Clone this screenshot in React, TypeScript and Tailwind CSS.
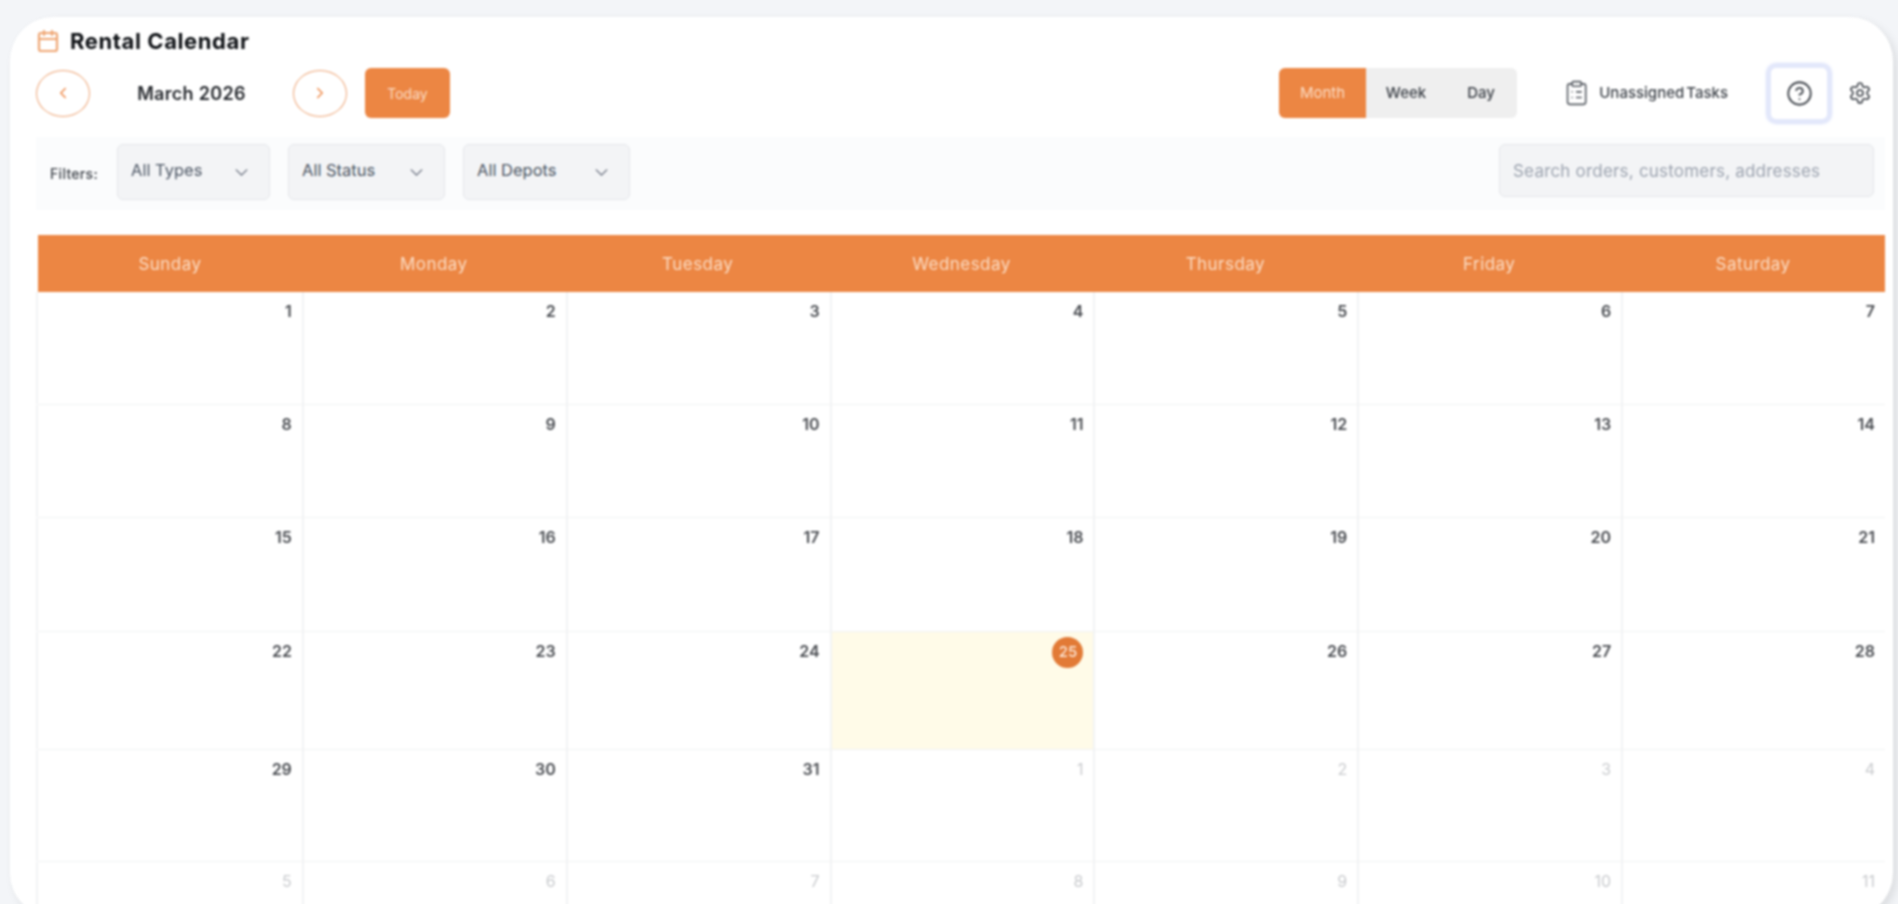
import { ChevronDown, ChevronLeft, ChevronRight, CircleHelp, ClipboardList, Settings, Calendar } from "lucide-react";

const font = { fontFamily: "Inter, 'Noto Sans', sans-serif" };
const days = ["Sunday", "Monday", "Tuesday", "Wednesday", "Thursday", "Friday", "Saturday"];
const rows: { h: string; cells: [number, boolean][] }[] = [
  { h: "h-[113px]", cells: [1, 2, 3, 4, 5, 6, 7].map((n) => [n, true]) },
  { h: "h-[113px]", cells: [8, 9, 10, 11, 12, 13, 14].map((n) => [n, true]) },
  { h: "h-[114px]", cells: [15, 16, 17, 18, 19, 20, 21].map((n) => [n, true]) },
  { h: "h-[118px]", cells: [22, 23, 24, 25, 26, 27, 28].map((n) => [n, true]) },
  { h: "h-[112px]", cells: [[29, true], [30, true], [31, true], [1, false], [2, false], [3, false], [4, false]] },
  { h: "h-[60px]", cells: [5, 6, 7, 8, 9, 10, 11].map((n) => [n, false]) },
];

function Select({ label, w }: { label: string; w: string }) {
  return (
    <div className={`${w} h-[56px] flex items-center justify-between pl-[13px] pr-[17px] rounded-md border border-[#e4e6ea] bg-[#f3f4f6] text-[16.5px] text-[#4b5563]`}>
      <span className="-mt-[3px]">{label}</span>
      <ChevronDown className="w-[21px] h-[21px] text-[#6b7280]" strokeWidth={1.6} />
    </div>
  );
}

export default function App() {
  return (
    <div className="w-[1898px] h-[904px] overflow-hidden bg-[#f3f5f8] pt-[17px] pl-[10px] pr-[5px]" style={font}>
      <div className="h-[900px] w-[1883px] overflow-hidden rounded-[44px] bg-white shadow-[4px_4px_10px_rgba(0,0,0,0.10)] pl-[26px] pr-[8px] blur-[0.8px]">
        <div className="flex items-center h-[45px] pt-[3px] gap-[10px]">
          <Calendar className="w-[24px] h-[24px] text-[#efa673]" strokeWidth={2.2} />
          <h1 className="text-[22px] font-bold tracking-[0.6px] text-[#0f1216]">Rental Calendar</h1>
        </div>

        <div className="flex items-center h-[50px] mt-[6px]">
          <button className="w-[54px] h-[47px] rounded-[50%] border border-[#eea678] bg-white flex items-center justify-center text-[#ee8a4a]">
            <ChevronLeft className="w-[18px] h-[18px]" strokeWidth={2} />
          </button>
          <div className="w-[203px] text-center text-[18px] font-semibold tracking-[0.3px] text-[#26292e]">March 2026</div>
          <button className="w-[54px] h-[47px] rounded-[50%] border border-[#eea678] bg-white flex items-center justify-center text-[#ee8a4a]">
            <ChevronRight className="w-[18px] h-[18px]" strokeWidth={2} />
          </button>
          <button className="ml-[18px] w-[85px] h-[50px] rounded-[6px] bg-[#ec8643] text-[14px] text-[#fbdcc4]">Today</button>

          <div className="ml-auto flex items-center">
            <div className="flex w-[238px] h-[50px] pt-[1px] rounded-[6px] bg-[#efefef] overflow-hidden text-[15px] font-medium text-[#3a3f46]">
              <div className="-mt-[1px] pt-[1px] w-[87px] bg-[#ec8643] flex items-center justify-center text-[15px] font-normal text-[#fbdcc4]">Month</div>
              <div className="w-[80px] flex items-center justify-center">Week</div>
              <div className="w-[70px] flex items-center justify-center">Day</div>
            </div>
            <div className="flex items-center ml-[46px] gap-[9px] w-[165px]">
              <ClipboardList className="w-[28px] h-[30px] text-[#555a61]" strokeWidth={1.4} />
              <span className="pt-[1px] text-[15px] font-medium [word-spacing:-2px] text-[#3e434a] whitespace-nowrap">Unassigned Tasks</span>
            </div>
            <div className="ml-[38px] w-[66px] h-[61px] rounded-[10px] border-[5px] border-[#e3e8fb] shadow-[0_0_3px_#e3e8fb] flex items-center justify-center">
              <CircleHelp className="w-[27px] h-[27px] text-[#3e434a]" strokeWidth={1.6} />
            </div>
            <div className="w-[53px] pl-[16px]">
              <Settings className="w-[24px] h-[24px] text-[#3e434a]" strokeWidth={1.6} />
            </div>
          </div>
        </div>

        <div className="mt-[19px] h-[73px] bg-[#fbfcfd] flex items-start pt-[7px] pr-[11px]">
          <span className="ml-[14px] mt-[19px] w-[67px] text-[14px] font-medium tracking-[0.3px] text-[#3e434a]">Filters:</span>
          <div className="flex gap-[18px]">
            <Select label="All Types" w="w-[153px]" />
            <Select label="All Status" w="w-[157px]" />
            <Select label="All Depots" w="w-[167px]" />
          </div>
          <div className="ml-auto w-[375px] h-[53px] flex items-center pl-[13px] pt-[2px] rounded-md border border-[#e4e6ea] bg-[#f3f4f6] text-[17px] tracking-[0.2px] text-[#9ca3af] whitespace-nowrap overflow-hidden">
            Search orders, customers, addresses
          </div>
        </div>

        <div className="mt-[25px] ml-[2px] w-[1847px]">
          <div className="grid grid-cols-7 h-[57px] pt-[2px] bg-[#ec8643] text-[17px] tracking-[0.45px] text-[#fbdcc4]">
            {days.map((d) => (
              <div key={d} className="flex items-center justify-center">{d}</div>
            ))}
          </div>
          {rows.map((r, i) => (
            <div key={i} className={`grid grid-cols-7 ${r.h} border-b border-[#f1f2f3]`}>
              {r.cells.map(([n, cur], j) => {
                const today = cur && n === 25;
                return (
                  <div key={j} className={`flex justify-end pr-[10px] border-l-2 border-[#f2f3f4] ${j === 0 ? "-ml-[2px]" : ""} ${today ? "bg-[#fffbe8]" : "bg-white"}`}>
                    {today ? (
                      <span className="mt-[5px] w-[31px] h-[31px] rounded-full bg-[#e27a36] flex items-center justify-center text-[15px] font-medium text-[#fde9da]">25</span>
                    ) : (
                      <span className={`mt-[7px] text-[16px] ${cur ? "font-semibold text-[#4a4d52]" : "font-normal text-[#c9cbce]"}`}>{n}</span>
                    )}
                  </div>
                );
              })}
            </div>
          ))}
        </div>
      </div>
    </div>
  );
}
